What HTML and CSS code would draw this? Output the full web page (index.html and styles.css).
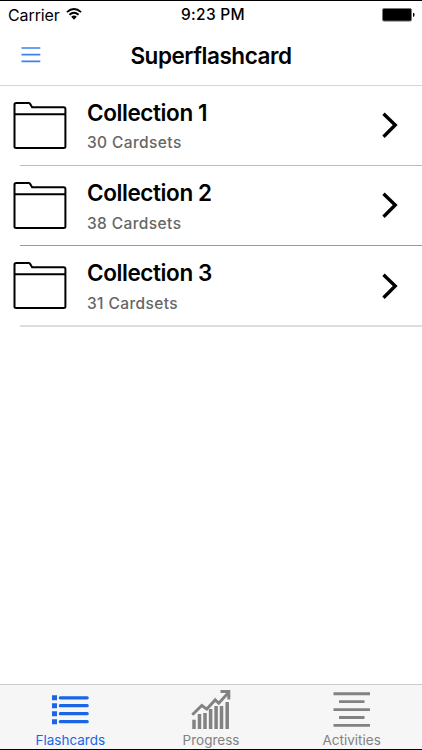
FILE: index.html
```html
<!DOCTYPE html>
<html lang="en">
<head>
<meta charset="utf-8">
<title>Superflashcard</title>
<link rel="stylesheet" href="styles.css">
</head>
<body>
<svg class="defs" width="0" height="0" aria-hidden="true">
  <symbol id="folder" viewBox="0 0 54 48"><path d="M1.5 13.2V3.6Q1.5 1.9 3.2 1.9H15.6q1 0 1.6 1l1.9 3.4h31.6q1.7 0 1.7 1.7v37.4q0 1.5-1.7 1.5H3.2q-1.7 0-1.7-1.5V13.2H52" fill="none" stroke="#000" stroke-width="2" stroke-linejoin="round"/></symbol>
  <symbol id="chevron" viewBox="0 0 18 28"><path d="M2.5 2.8 14.2 14 2.5 25.7" fill="none" stroke="#000" stroke-width="3.4"/></symbol>
</svg>
<div class="screen">
  <header class="status">
    <div class="carrier"><span class="carrier-name">Carrier</span>
      <svg class="wifi" viewBox="0 0 16 12"><path d="M.9 4.1Q8-2 15.1 4.1M3.4 6.8Q8 2.7 12.6 6.8" fill="none" stroke="#000" stroke-width="1.9"/><path d="M5.2 8.7Q8 6.4 10.8 8.7L8 11.7Z"/></svg>
    </div>
    <span class="time">9:23 PM</span>
    <svg class="battery" viewBox="0 0 33 14"><rect x=".5" y=".5" width="29" height="12.6" rx="1.5" stroke="#777"/><path d="M31 4.7q1.6 0 1.6 2.1T31 8.9Z"/></svg>
  </header>
  <nav class="bar">
    <svg class="menu" viewBox="0 0 20 18"><path d="M.5 2h18.8M.5 8.6h18.8M.5 15.3h18.8" stroke="#3b82ec" stroke-width="1.7"/></svg>
    <h1 class="title">Superflashcard</h1>
  </nav>
  <main class="list">
    <div class="row">
      <svg class="folder"><use href="#folder"/></svg>
      <div class="info"><span class="name">Collection 1</span><span class="count">30 Cardsets</span></div>
      <svg class="chevron"><use href="#chevron"/></svg>
    </div>
    <div class="row dark">
      <svg class="folder"><use href="#folder"/></svg>
      <div class="info"><span class="name">Collection 2</span><span class="count">38 Cardsets</span></div>
      <svg class="chevron"><use href="#chevron"/></svg>
    </div>
    <div class="row light">
      <svg class="folder"><use href="#folder"/></svg>
      <div class="info"><span class="name">Collection 3</span><span class="count">31 Cardsets</span></div>
      <svg class="chevron"><use href="#chevron"/></svg>
    </div>
  </main>
  <footer class="tabs">
    <div class="tab active">
      <svg class="icon" viewBox="0 0 40 42"><path d="M2 8.3h5v5H2zM2 16.3h5v5H2zM2 24.2h5v5H2zM2 32.2h5v5H2z" fill="currentColor" stroke="none"/><path d="M10.3 10.8h26.9M10.3 18.7h26.9M10.3 26.7h26.9M10.3 34.7h26.9" stroke-width="3.2" stroke-linecap="round"/></svg>
      <span class="label">Flashcards</span>
    </div>
    <div class="tab">
      <svg class="icon" viewBox="0 0 40 42"><path d="M3 42v-9.3M8.5 42V27M14 42V26M19.6 42V22M25.1 42V19M30.5 42V19M36.2 42V15" stroke-width="3.5"/><path d="m1.3 27.7 9.5-9.2 5 3.6 8.4-9.2 3.6 3.3L37 6" stroke-width="2.9"/><path d="M29.5 3h9.8v9.5h-3V6h-6.8z" fill="currentColor" stroke="none"/></svg>
      <span class="label">Progress</span>
    </div>
    <div class="tab">
      <svg class="icon" viewBox="0 0 40 42"><path d="M1.5 6.7H38M7 14.6h25.5M1.5 22.6H38M7 30.5h25.5M1.5 38.4H38" stroke-width="2.9"/></svg>
      <span class="label">Activities</span>
    </div>
  </footer>
</div>
</body>
</html>
```
FILE: styles.css
```css
* { box-sizing: border-box; }
body { margin: 0; background: #fff; font-family: Inter, "Liberation Sans", sans-serif; color: #000; }
.defs { display: block; width: 0; height: 0; }
.screen { height: 750px; display: flex; flex-direction: column; border-top: 1px solid #000; border-bottom: 1px solid #000; overflow: hidden; }
.status { height: 28px; padding: 0 8px; display: grid; grid-template-columns: 1fr auto 1fr; align-items: center; font-size: 16px; line-height: 28px; }
.carrier { display: flex; align-items: center; gap: 7px; }
.carrier-name { letter-spacing: -.1px; }
.wifi { width: 16px; height: 12px; margin: -2px 0 0 -1px; }
.time { font-weight: 550; font-size: 15.5px; letter-spacing: .3px; position: relative; left: 2px; }
.battery { width: 33px; height: 14px; justify-self: end; margin-right: -1px; }
.bar { height: 57px; border-bottom: 1px solid #d5d5d5; display: grid; grid-template-columns: 60px 1fr 60px; align-items: center; }
.menu { width: 20px; height: 18px; margin: -4px 0 0 21px; }
.title { margin: -2px 0 0; font-size: 22.5px; line-height: 54px; font-weight: 600; letter-spacing: -.45px; text-align: center; white-space: nowrap; }
.list { flex: 1; }
.row { height: 80px; display: flex; align-items: flex-start; padding: 15px 22px 0 13px; background: linear-gradient(#bdbdbd, #bdbdbd) 20px 100% / 100% 1px no-repeat; }
.dark { background-image: linear-gradient(#999, #999); }
.light { height: 81px; background-image: linear-gradient(#ddd, #ddd); background-size: 100% 2px; }
.folder { width: 54px; height: 48px; margin-right: 20px; }
.light .folder { margin-top: .4px; }
.info { flex: 1; display: flex; flex-direction: column; }
.name { font-size: 22.5px; font-weight: 580; line-height: 26px; letter-spacing: -.4px; margin-top: -1px; }
.count { font-size: 15.5px; font-weight: 550; line-height: 20px; margin-top: 7px; letter-spacing: .4px; color: #666; }
.dark .count, .light .count { margin-top: 8px; }
.chevron { width: 18px; height: 28px; margin: 10px 1px 0 0; }
.light .chevron { margin-top: 10.6px; }
.tabs { height: 65px; background: #f6f6f6; border-top: 1px solid #ccc; display: grid; grid-template-columns: repeat(3, 1fr); }
.tab { color: #828282; display: flex; flex-direction: column; align-items: center; }
.active { color: #1b66e5; }
.icon { width: 40px; height: 42px; margin-top: 2px; fill: none; stroke: currentColor; }
.label { font-size: 13.5px; line-height: 16px; margin-top: 3px; }
```
